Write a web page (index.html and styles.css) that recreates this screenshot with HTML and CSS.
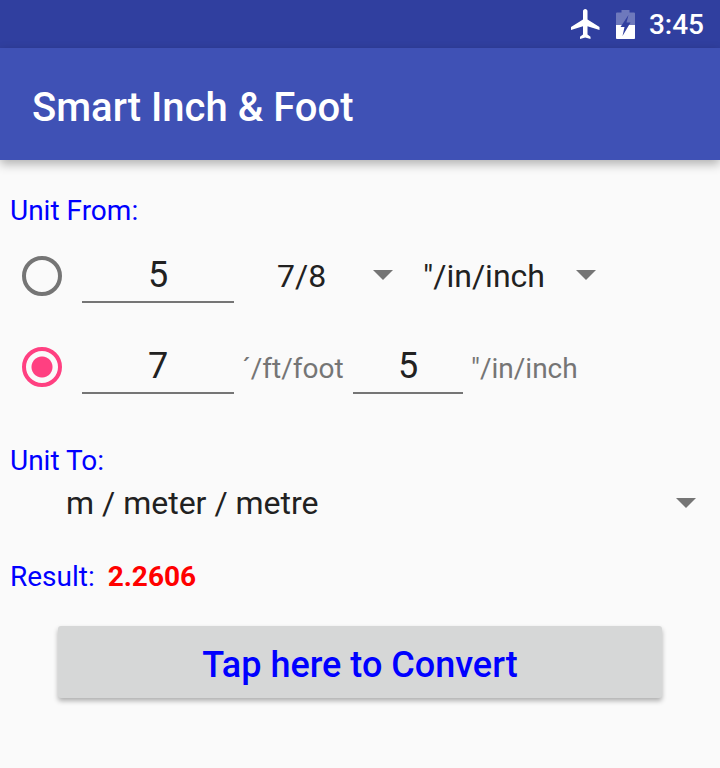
FILE: index.html
```html
<!DOCTYPE html>
<html lang="en">
<head>
    <meta charset="UTF-8">
    <meta name="viewport" content="width=device-width, initial-scale=1.0">
    <title>Smart Inch &amp; Foot</title>
    <link rel="stylesheet" href="styles.css">
</head>
<body>
    <div class="status-bar">
        <svg class="plane" viewBox="0 0 24 24" width="36" height="36"><path d="M21 16v-2l-8-5V3.500C13 2.670 12.330 2 11.500 2S10 2.670 10 3.500V9l-8 5v2l8-2.500V19l-2 1.500V22l3.500-1 3.500 1v-1.500L13 19v-5.500l8 2.500z" fill="#fff"/></svg>
        <svg class="battery" viewBox="0 0 19 29" width="19" height="29">
            <path d="M5.500 0h8v2.500H18a1 1 0 0 1 1 1V28a1 1 0 0 1-1 1H1a1 1 0 0 1-1-1V3.500a1 1 0 0 1 1-1h4.500z" fill="#fff" fill-opacity="0.3"/>
            <path d="M0 15h19v13a1 1 0 0 1-1 1H1a1 1 0 0 1-1-1z" fill="#fff"/>
            <path d="M12.500 5 4.500 17h4l-2 9 8-13.500h-4z" fill="#303f9f"/>
        </svg>
        <span class="clock">3:45</span>
    </div>
    <header class="app-bar">Smart Inch &amp; Foot</header>

    <main class="content">
        <div class="label label-from">Unit From:</div>

        <div class="row row-one">
            <span class="radio"></span>
            <span class="field field-wide">5</span>
            <div class="spinner spinner-frac"><span>7/8</span><i class="arrow"></i></div>
            <div class="spinner spinner-unit"><span>"/in/inch</span><i class="arrow"></i></div>
        </div>

        <div class="row row-two">
            <span class="radio radio-on"></span>
            <span class="field field-wide">7</span>
            <span class="unit unit-foot">´/ft/foot</span>
            <span class="field field-small">5</span>
            <span class="unit unit-inch">"/in/inch</span>
        </div>

        <div class="label label-to">Unit To:</div>
        <div class="spinner spinner-to"><span>m / meter / metre</span><i class="arrow"></i></div>

        <div class="label result">Result: <b>2.2606</b></div>

        <button class="convert-btn" type="button">Tap here to Convert</button>
    </main>
</body>
</html>
```

FILE: styles.css
```css
/* General Styles */
body {
    margin: 0;
    width: 720px;
    height: 768px;
    overflow: hidden;
    font-family: Roboto, sans-serif;
    background-color: #fafafa;
    color: #212121;
}

.status-bar {
    height: 48px;
    background-color: #303f9f;
    display: flex;
    align-items: center;
    justify-content: flex-end;
    padding-right: 16px;
    box-sizing: border-box;
    color: #fff;
}

.plane {
    margin-right: 12px;
}

.battery {
    margin-right: 14px;
}

.clock {
    font-size: 28px;
    font-weight: 500;
}

.app-bar {
    height: 112px;
    background-color: #3f51b5;
    color: #fff;
    font-size: 40px;
    font-weight: 500;
    line-height: 120px;
    padding-left: 32px;
    box-shadow: 0 4px 10px rgba(0, 0, 0, 0.3);
}

.content {
    display: flex;
    flex-direction: column;
    padding-left: 10px;
}

.label {
    font-size: 28px;
    line-height: 34px;
    color: #0000ff;
}

.label-from {
    margin-top: 34px;
}

.row {
    display: flex;
    align-items: center;
    height: 91px;
}

.row-one {
    margin-top: 2px;
}

.radio {
    width: 40px;
    height: 40px;
    box-sizing: border-box;
    border: 4px solid #757575;
    border-radius: 50%;
    margin-left: 12px;
    margin-right: 20px;
    flex-shrink: 0;
}

.radio-on {
    border-color: #ff4081;
    background: radial-gradient(circle, #ff4081 0 10px, transparent 11px);
}

.field {
    height: 50px;
    margin-top: 2px;
    border-bottom: 2px solid #757575;
    font-size: 36px;
    line-height: 48px;
    text-align: center;
    box-sizing: content-box;
}

.field-wide {
    width: 152px;
}

.field-small {
    width: 110px;
}

.unit {
    font-size: 28px;
    color: #757575;
    padding-top: 4px;
}

.unit-foot {
    margin-left: 8px;
    width: 111px;
}

.unit-inch {
    margin-left: 8px;
}

.spinner {
    display: flex;
    align-items: center;
    font-size: 32px;
    position: relative;
}

.arrow {
    position: absolute;
    width: 0;
    height: 0;
    border-left: 10px solid transparent;
    border-right: 10px solid transparent;
    border-top: 10px solid #757575;
}

.spinner-frac {
    margin-left: 43px;
    width: 146px;
}

.spinner-frac .arrow {
    left: 96px;
    top: 13px;
}

.spinner-unit {
    width: 180px;
}

.spinner-unit .arrow {
    left: 153px;
    top: 13px;
}

.label-to {
    margin-top: 32px;
}

.spinner-to {
    margin-left: 56px;
    height: 36px;
    margin-top: 7px;
}

.spinner-to .arrow {
    left: 610px;
    top: 13px;
}

.result {
    margin-top: 39px;
}

.result b {
    color: #ff0000;
    margin-left: 6px;
}

.convert-btn {
    align-self: flex-start;
    margin-left: 48px;
    margin-top: 32px;
    padding-top: 7px;
    width: 604px;
    height: 72px;
    background-color: #d6d7d7;
    color: #0000ff;
    border: none;
    border-radius: 3px;
    font-family: Roboto, sans-serif;
    font-size: 36px;
    font-weight: 500;
    box-shadow: 0 3px 5px rgba(0, 0, 0, 0.3);
}
```
